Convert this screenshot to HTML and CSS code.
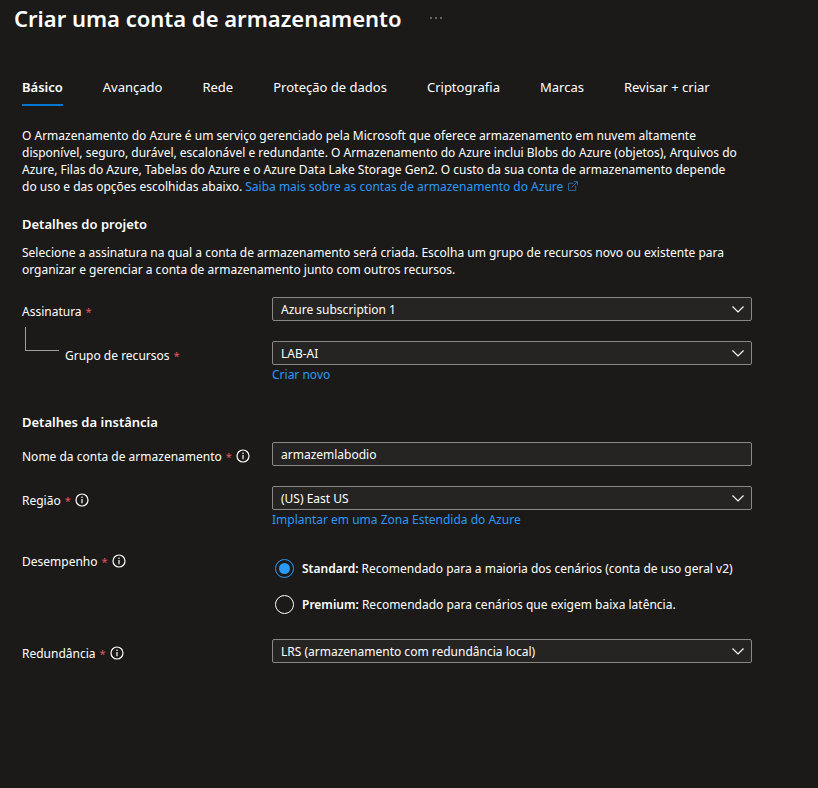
FILE: index.html
```
<!DOCTYPE html>
<html lang="pt-BR">
<head>
<meta charset="utf-8">
<meta name="viewport" content="width=device-width, initial-scale=1">
<title>Criar uma conta de armazenamento</title>
<link rel="stylesheet" href="styles.css">
</head>
<body>
<svg class="defs" aria-hidden="true">
  <symbol id="info" viewBox="0 0 14 14"><circle cx="7" cy="7" r="6" fill="none" stroke="currentColor" stroke-width="1.2"/><path d="M7 6v4.2" stroke="currentColor" stroke-width="1.2"/><circle cx="7" cy="4.2" r=".8" fill="currentColor"/></symbol>
  <symbol id="chevron" viewBox="0 0 12 7"><path d="M.5.5L6 6 11.5.5" fill="none" stroke="currentColor" stroke-width="1.2"/></symbol>
</svg>
<header class="header">
  <h1 class="title">Criar uma conta de armazenamento</h1>
  <button class="more" type="button" aria-label="Mais"><svg width="12" height="2" viewBox="0 0 12 2" fill="currentColor"><circle cx="1" cy="1" r=".8"/><circle cx="6" cy="1" r=".8"/><circle cx="11" cy="1" r=".8"/></svg></button>
</header>
<main class="content">
  <nav class="tabs">
    <a class="tab tab-active" href="#">Básico</a>
    <a class="tab" href="#">Avançado</a>
    <a class="tab" href="#">Rede</a>
    <a class="tab" href="#">Proteção de dados</a>
    <a class="tab" href="#">Criptografia</a>
    <a class="tab" href="#">Marcas</a>
    <a class="tab" href="#">Revisar + criar</a>
  </nav>
  <p class="text">O Armazenamento do Azure é um serviço gerenciado pela Microsoft que oferece armazenamento em nuvem altamente<br>disponível, seguro, durável, escalonável e redundante. O Armazenamento do Azure inclui Blobs do Azure (objetos), Arquivos do<br>Azure, Filas do Azure, Tabelas do Azure e o Azure Data Lake Storage Gen2. O custo da sua conta de armazenamento depende<br>do uso e das opções escolhidas abaixo. <a class="link" href="#">Saiba mais sobre as contas de armazenamento do Azure <svg class="external" viewBox="0 0 11 11" fill="none" stroke="currentColor"><path d="M6 2.5H.5v8h8V5M4 7l6-6M6.5.5h4v4"/></svg></a></p>
  <form class="form">
    <section class="section">
      <h2 class="heading">Detalhes do projeto</h2>
      <p class="text">Selecione a assinatura na qual a conta de armazenamento será criada. Escolha um grupo de recursos novo ou existente para<br>organizar e gerenciar a conta de armazenamento junto com outros recursos.</p>
      <div class="rows rows-project">
        <div class="row">
          <div class="label"><label for="sub">Assinatura</label><span class="required">*</span></div>
          <div class="select"><select id="sub"><option>Azure subscription 1</option></select><svg class="chevron"><use href="#chevron"/></svg></div>
        </div>
        <div class="row">
          <div class="label label-child"><label for="group">Grupo de recursos</label><span class="required">*</span></div>
          <div>
            <div class="select"><select id="group"><option>LAB-AI</option></select><svg class="chevron"><use href="#chevron"/></svg></div>
            <a class="link link-below" href="#">Criar novo</a>
          </div>
        </div>
      </div>
    </section>
    <section class="section">
      <h2 class="heading">Detalhes da instância</h2>
      <div class="rows">
        <div class="row">
          <div class="label"><label for="name">Nome da conta de armazenamento</label><span class="required">*</span><svg class="info"><use href="#info"/></svg></div>
          <input class="input" id="name" type="text" value="armazemlabodio">
        </div>
        <div class="row">
          <div class="label"><label for="region">Região</label><span class="required">*</span><svg class="info"><use href="#info"/></svg></div>
          <div>
            <div class="select"><select id="region"><option>(US) East US</option></select><svg class="chevron"><use href="#chevron"/></svg></div>
            <a class="link link-below" href="#">Implantar em uma Zona Estendida do Azure</a>
          </div>
        </div>
        <div class="row" role="radiogroup" aria-labelledby="perf">
          <div class="label"><span id="perf">Desempenho</span><span class="required">*</span><svg class="info"><use href="#info"/></svg></div>
          <div class="radios">
            <label class="radio"><input type="radio" name="perf" checked><span><b>Standard:</b> Recomendado para a maioria dos cenários (conta de uso geral v2)</span></label>
            <label class="radio"><input type="radio" name="perf"><span><b>Premium:</b> Recomendado para cenários que exigem baixa latência.</span></label>
          </div>
        </div>
        <div class="row">
          <div class="label"><label for="red">Redundância</label><span class="required">*</span><svg class="info"><use href="#info"/></svg></div>
          <div class="select"><select id="red"><option>LRS (armazenamento com redundância local)</option></select><svg class="chevron"><use href="#chevron"/></svg></div>
        </div>
      </div>
    </section>
  </form>
</main>
</body>
</html>
```
FILE: styles.css
```
* { box-sizing: border-box; }
body {
  margin: 0;
  min-height: 100vh;
  background: #1b1a19;
  color: #fff;
  font: 12px/17px "Noto Sans", "Open Sans", sans-serif;
}
h1, h2, p { margin: 0; }
.defs { display: none; }
.header { display: flex; align-items: center; gap: 26px; padding: 3px 14px; }
.title { font-size: 22px; line-height: 30px; font-weight: 600; }
.more { display: flex; padding: 2px; border: 0; background: none; color: #c8c6c4; }
.content { padding: 38px 22px; }
.tabs { display: flex; flex-wrap: wrap; column-gap: 40px; margin-bottom: 21px; }
.tab {
  padding: 3px 0 7px;
  border-bottom: 2px solid transparent;
  color: #fff;
  font-size: 13px;
  line-height: 20px;
  text-decoration: none;
}
.tab-active { border-color: #0078d4; font-weight: 600; }
.link { color: #2899f5; text-decoration: none; }
.external { width: 10px; height: 10px; margin-left: 2px; opacity: .7; }
.form { display: grid; gap: 32px; max-width: 730px; margin-top: 21px; }
.heading { margin-bottom: 11px; font-size: 13px; line-height: 17px; font-weight: 600; }
b { font-weight: 600; }
.rows { display: grid; gap: 20px; }
.rows-project { margin-top: 19px; }
.row { display: grid; grid-template-columns: 250px minmax(0, 1fr); }
.label { display: flex; align-items: center; gap: 4px; height: 24px; padding-top: 4px; }
.label-child { position: relative; padding-left: 43px; }
.label-child::before {
  content: "";
  position: absolute;
  left: 3px;
  bottom: 14px;
  width: 33px;
  height: 23px;
  border: solid #a19f9d;
  border-width: 0 0 1px 1px;
}
.required { color: #e0565c; font-size: 11px; }
.info { width: 14px; height: 14px; }
.select { position: relative; height: 24px; }
.select select, .input {
  display: block;
  width: 100%;
  height: 24px;
  padding: 0 8px;
  border: 1px solid #8a8886;
  border-radius: 2px;
  background: #252423;
  color: #fff;
  font: inherit;
  appearance: none;
}
.chevron {
  position: absolute;
  right: 8px;
  top: 9px;
  width: 12px;
  height: 7px;
  pointer-events: none;
}
.link-below { display: block; margin-bottom: -2px; line-height: 19px; }
.radios { display: grid; gap: 16px; padding: 11px 3px 5px; }
.radio { display: flex; align-items: center; gap: 8px; min-height: 20px; }
.radio input {
  display: grid;
  place-items: center;
  flex: none;
  width: 19px;
  height: 19px;
  margin: 0;
  border: 1px solid #fff;
  border-radius: 50%;
  appearance: none;
}
.radio input:checked { border-color: #2899f5; }
.radio input:checked::before {
  content: "";
  width: 11px;
  height: 11px;
  border-radius: 50%;
  background: #2899f5;
}
```
